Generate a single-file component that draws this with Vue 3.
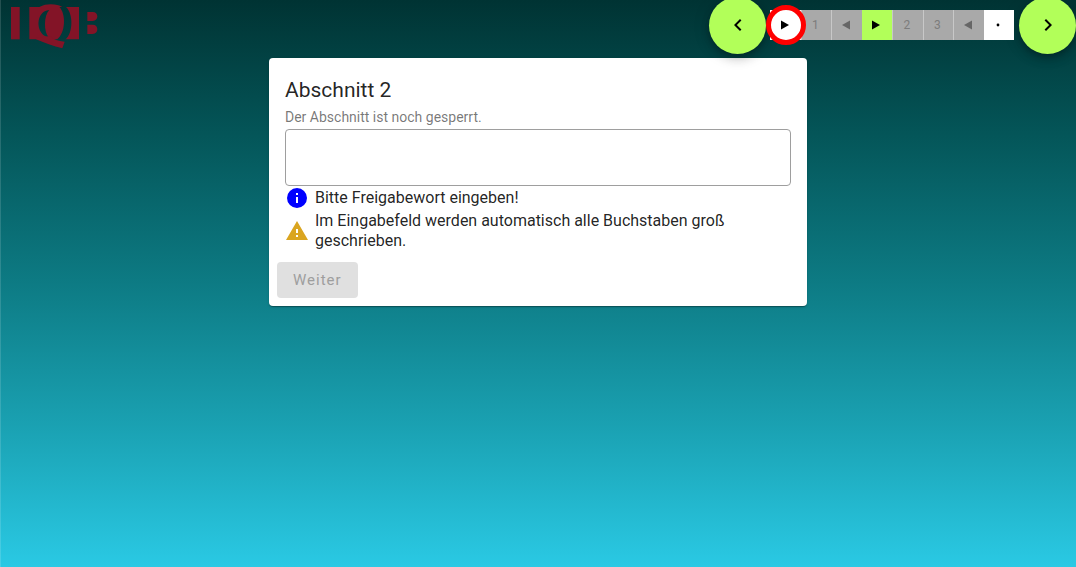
<script setup>
import { ref } from 'vue'

const code = ref('')
const pages = [
  { label: '►', title: 'Start', state: 'open current' },
  { label: '1', title: 'Seite 1', state: 'locked' },
  { label: '◄', title: 'Ende Abschnitt 1', state: 'locked' },
  { label: '►', title: 'Abschnitt 2', state: 'active' },
  { label: '2', title: 'Seite 2', state: 'locked' },
  { label: '3', title: 'Seite 3', state: 'locked' },
  { label: '◄', title: 'Ende Abschnitt 2', state: 'locked' },
  { label: '·', title: 'Ende', state: 'open' }
]
</script>

<template>
  <div class="player">
    <header class="bar">
      <a class="logo" href="#" aria-label="IQB">
        <svg viewBox="0 0 300 150" width="100" height="50" aria-hidden="true">
          <mask id="counters">
            <rect width="300" height="150" fill="#fff" />
            <path fill="#000" d="M148 30C106 32 104 104 146 112C131 96 131 46 148 30z" />
            <path fill="#000" d="M178 21H198C220 40 220 100 196 119H170C198 100 198 40 178 21z" />
          </mask>
          <g fill="#831427">
            <path d="M33 21H59V118H33z" />
            <path mask="url(#counters)" d="M88 21H118C130 15 140 13 152 13C168 13 178 16 187 21H237V118H88z" />
            <path d="M108 114L150 108C160 118 175 124 194 125L187 145C160 140 132 128 108 118z" />
            <path d="M262 36H278C287 36 292 42 292 49S287 63 278 63H262zM262 74H278C287 74 292 80 292 88S287 102 278 102H262z" />
          </g>
        </svg>
      </a>
      <nav class="nav" aria-label="Seitennavigation">
        <button class="fab" type="button" aria-label="Zurück">
          <svg viewBox="0 0 24 24" width="24" height="24"><path d="M15.410 7.410 14 6l-6 6 6 6 1.410-1.410L10.830 12z" /></svg>
        </button>
        <div class="pages">
          <button
            v-for="(p, i) in pages"
            :key="i"
            type="button"
            class="page"
            :class="p.state"
            :disabled="p.state === 'locked'"
            :aria-label="p.title"
          >
            <svg v-if="p.label === '►'" viewBox="0 0 10 10" width="10" height="10"><path d="M1 .500 9 5 1 9.500z" /></svg>
            <svg v-else-if="p.label === '◄'" viewBox="0 0 10 10" width="10" height="10"><path d="M9 .500 1 5l8 4.500z" /></svg>
            <svg v-else-if="p.label === '·'" viewBox="0 0 10 10" width="10" height="10"><circle cx="5" cy="5" r="1.400" /></svg>
            <template v-else>{{ p.label }}</template>
          </button>
        </div>
        <button class="fab" type="button" aria-label="Weiter">
          <svg viewBox="0 0 24 24" width="24" height="24"><path d="M10 6 8.590 7.410 13.170 12l-4.580 4.590L10 18l6-6z" /></svg>
        </button>
      </nav>
    </header>

    <main class="card">
      <form class="content" @submit.prevent>
        <h1>Abschnitt 2</h1>
        <label class="subtitle" for="code">Der Abschnitt ist noch gesperrt.</label>
        <input id="code" v-model="code" class="field" type="text" autocomplete="off" />
        <p class="hint">
          <svg class="info" viewBox="0 0 24 24" width="24" height="24" aria-hidden="true"><path d="M12 2a10 10 0 1 0 0 20 10 10 0 0 0 0-20zm1 15h-2v-6h2zm0-8h-2V7h2z" /></svg>
          <span>Bitte Freigabewort eingeben!</span>
        </p>
        <p class="hint">
          <svg class="warn" viewBox="0 0 24 24" width="24" height="24" aria-hidden="true"><path d="M1 21h22L12 2zm12-3h-2v-2h2zm0-4h-2v-4h2z" /></svg>
          <span>Im Eingabefeld werden automatisch alle Buchstaben groß geschrieben.</span>
        </p>
      </form>
      <div class="actions">
        <button class="submit" type="button" disabled>Weiter</button>
      </div>
    </main>
  </div>
</template>

<style>
body {
  margin: 0;
}
</style>

<style scoped>
.player {
  box-sizing: border-box;
  min-height: 100vh;
  font-family: Roboto, "Liberation Sans", sans-serif;
  background: linear-gradient(to bottom, #003333 0%, #045659 24%, #0d7b84 50%, #1aa1b2 75%, #2ac9e4 100%);
  box-shadow: inset 1px 0 rgba(255, 255, 255, 0.14);
  overflow: hidden;
}
.bar {
  display: flex;
  justify-content: space-between;
  align-items: center;
  height: 50px;
}
.logo,
.logo svg {
  display: block;
}
.nav {
  display: flex;
  align-items: center;
  gap: 4px;
}
.fab {
  display: flex;
  align-items: center;
  justify-content: center;
  width: 57px;
  height: 57px;
  padding: 0;
  border: 0;
  border-radius: 50%;
  background: #b2ff59;
  box-shadow: 0 3px 5px -1px rgba(0, 0, 0, 0.2), 0 6px 10px rgba(0, 0, 0, 0.14), 0 1px 18px rgba(0, 0, 0, 0.12);
}
.pages {
  display: flex;
  width: 244px;
  margin-right: 1px;
}
.page {
  position: relative;
  box-sizing: border-box;
  display: flex;
  flex: 1;
  align-items: center;
  justify-content: center;
  height: 30px;
  padding: 0 2px 0 0;
  border: 0;
  border-left: 1px solid #c8c8c8;
  font: 12px Roboto, "Liberation Sans", sans-serif;
  color: #000;
  background: #fff;
}
.page svg,
.fab svg {
  fill: currentColor;
}
.locked {
  color: #7c7c7c;
  background: #a9a9a9;
}
.locked svg {
  fill: #666;
}
.active {
  background: #b2ff59;
  border-left-color: #b2ff59;
}
.open {
  border-left-color: #fff;
}
.current {
  z-index: 1;
}
.current::after {
  content: "";
  position: absolute;
  box-sizing: border-box;
  top: -5px;
  left: -5px;
  width: 40px;
  height: 40px;
  border: 5px solid red;
  border-radius: 50%;
}
.card {
  box-sizing: border-box;
  width: 50%;
  margin: 8px auto 0;
  padding: 16px 8px 8px;
  border-radius: 4px;
  background: #fff;
  box-shadow: 0 2px 1px -1px rgba(0, 0, 0, 0.2), 0 1px 1px rgba(0, 0, 0, 0.14), 0 1px 3px rgba(0, 0, 0, 0.12);
}
.content {
  padding: 0 8px;
}
h1 {
  margin: 0;
  font-size: 21px;
  font-weight: 400;
  line-height: 32px;
  color: rgba(0, 0, 0, 0.87);
}
.subtitle {
  display: block;
  font-size: 14px;
  line-height: 23px;
  color: rgba(0, 0, 0, 0.54);
}
.field {
  box-sizing: border-box;
  display: block;
  width: 100%;
  height: 57px;
  padding: 0 16px;
  border: 1px solid #9e9e9e;
  border-radius: 4px;
  font: 16px Roboto, "Liberation Sans", sans-serif;
  text-transform: uppercase;
  background: #fff;
}
.hint {
  display: flex;
  align-items: center;
  gap: 6px;
  margin: 0;
  font-size: 16px;
  line-height: 20px;
  color: rgba(0, 0, 0, 0.87);
}
.hint + .hint {
  padding-top: 1px;
}
.hint svg {
  flex: none;
}
.info {
  fill: #00f;
}
.warn {
  fill: #daa520;
}
.actions {
  padding-top: 11px;
}
.submit {
  height: 36px;
  padding: 0 16px;
  border: 0;
  border-radius: 4px;
  font: 15px Roboto, "Liberation Sans", sans-serif;
  letter-spacing: 1px;
  color: #9e9e9e;
  background: #e0e0e0;
}
</style>
